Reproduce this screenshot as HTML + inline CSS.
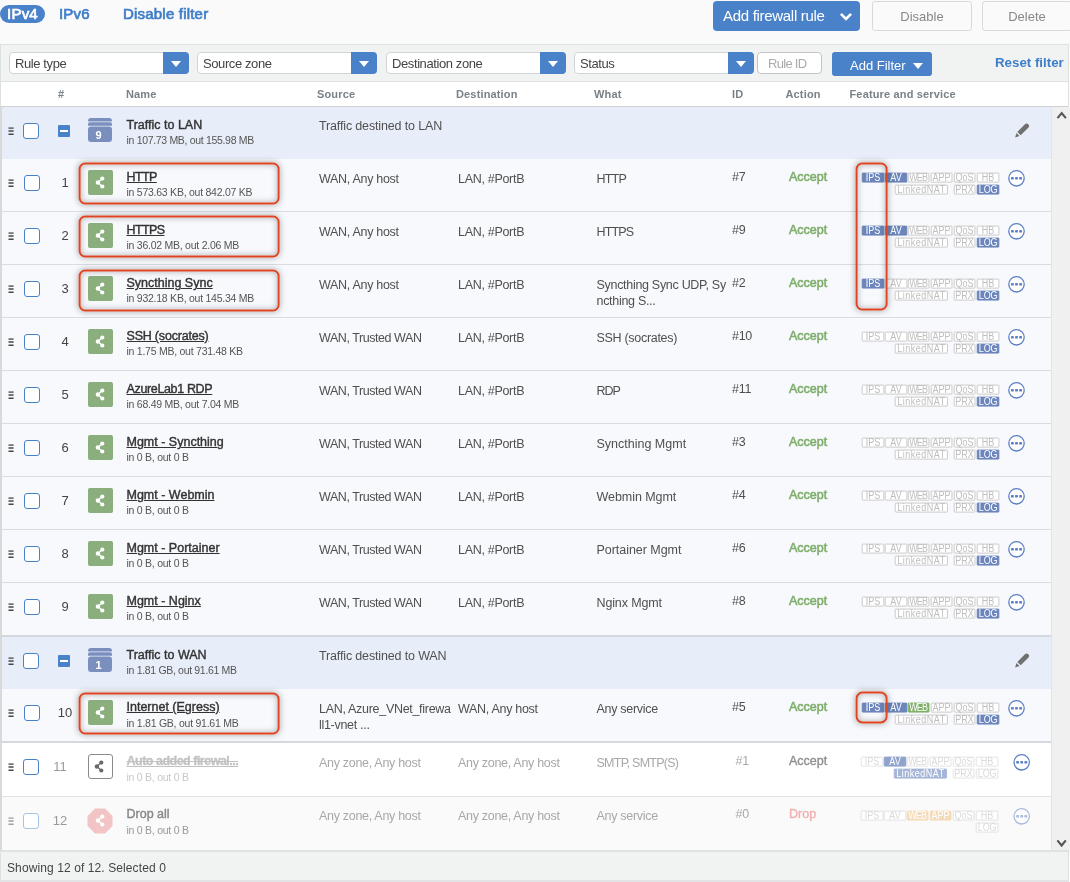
<!DOCTYPE html>
<html><head><meta charset="utf-8"><title>Firewall rules</title>
<style>
*{box-sizing:border-box;margin:0;padding:0}
html,body{width:1070px;height:882px;overflow:hidden;background:#fafafa}
body{position:relative;font-family:"Liberation Sans",sans-serif;color:#444;font-size:13px}
#wrap{position:absolute;left:0;top:0;width:1070px;height:882px;will-change:transform;overflow:hidden}
.abs{position:absolute}
.tab{position:absolute;top:5px;font-size:15px;font-weight:normal;-webkit-text-stroke:0.7px #3f7ec8;color:#3f7ec8;line-height:18px;height:18px;letter-spacing:0.2px}
.tab.on{left:0;width:45px;background:#4a82c9;color:#fff;-webkit-text-stroke-color:#fff;border-radius:9px;text-align:center}
.btn{position:absolute;top:1px;height:30px;border-radius:4px;font-size:15px;line-height:30px}
.btn.pri{left:713px;width:147px;background:#4a82c9;color:#fff;padding-left:10px;letter-spacing:-0.3px}
.btn.sec{background:#fafafa;border:1px solid #d9d9d9;color:#888;text-align:center;line-height:29px;font-size:13px;top:1px;height:30px;border-radius:3px}
.fbar{position:absolute;left:0;top:44px;width:1069px;height:37px;background:#f1f3f3;border:1px solid #dde1e4;border-bottom:none}
.sel{position:absolute;top:52px;height:22px;letter-spacing:-0.4px;background:#fff;border:1px solid #d0d4d8;border-radius:4px;font-size:13px;line-height:21.5px;padding-left:5px;color:#444}
.sel b{position:absolute;right:-1px;top:-1px;width:26px;height:22px;background:#4a82c9;border-radius:0 4px 4px 0}
.sel b:after{content:"";position:absolute;left:7.5px;top:8.5px;border:5px solid transparent;border-top:6px solid #fff;border-bottom:none}
.hdr{position:absolute;left:0;top:81px;width:1069px;height:26px;background:#fff;border-top:1px solid #dde1e4;border-bottom:1px solid #d2d2d2;border-left:1px solid #dde1e4;border-right:1px solid #dde1e4}
.hdr span{position:absolute;top:5px;font-size:11px;font-weight:bold;color:#7a8288;line-height:14px;letter-spacing:0.150px}
.tbl{position:absolute;left:0;top:107px;width:1052px;height:744px;border-left:2px solid #d9d9d9;background:#f8f9fc}
.row{position:absolute;left:2px;width:1050px;height:53px}
.row.grp{background:#e8eef9;height:52px}
.row.rule{background:#f8f9fc;border-bottom:1px solid #d9dde1}
.row.rule.last{border-bottom:2px solid #d4d9e0}
.row.disabled{background:#fff;border-bottom:1px solid #e0e3e6}
.row.drop{background:#fafafa;border-bottom:1px solid #e0e3e6}
.drag{position:absolute;left:6px;top:20px;transform:translate(0.3px,0.2px)}
.cb{position:absolute;left:22px;top:16px;width:16px;height:16px;border:1px solid #4a82c9;border-radius:3px;background:#fff}
.minus{position:absolute;left:56px;top:18px;width:12px;height:12px;background:#4a82c9;border-radius:1px}
.minus:after{content:"";position:absolute;left:2px;top:5px;width:8px;height:2px;background:#fff}
.gicon{position:absolute;left:86px;top:11px;width:24px;height:24px}
.gicon svg{position:absolute;left:0;top:0}
.gicon b{position:absolute;left:-1.5px;top:11px;width:24px;text-align:center;color:#fff;font-size:11px;line-height:12px}
.num{position:absolute;left:48px;top:16px;width:30px;text-align:center;font-size:13px;line-height:16px;color:#444}
.ricon{position:absolute;left:86px;top:11px;width:25px;height:25px;background:#8aae7c;border-radius:2px}
.ricon svg{position:absolute;left:0;top:0}
.ricon.dis{background:#fff;border:1.5px solid #8a8a8a;border-radius:3px}
.ricon.dis svg{left:-1.5px;top:-1.5px}
.ricon.oct{background:none;width:26px;height:26px}
.ricon.oct svg{left:0;top:0}
.ricon.oct .in svg{left:0.5px;top:0.5px}
.nm{position:absolute;left:124.5px;top:11px;font-size:12.5px;font-weight:normal;-webkit-text-stroke:0.4px #333;color:#333;line-height:15px;white-space:nowrap;letter-spacing:0px}
.nm.rn{text-decoration:underline;top:11px}
.rule .sub{top:27px}
.grp .cb{left:21px}
.sub{position:absolute;left:124.5px;top:27px;font-size:10.5px;color:#555;line-height:13px;white-space:nowrap;letter-spacing:-0.250px}
.grp .sub{letter-spacing:-0.320px}
.c{position:absolute;font-size:12.5px;line-height:16px;color:#505050;white-space:nowrap;top:12px;letter-spacing:-0.3px}
.c.two{top:12px;line-height:16.4px}
.src{left:317px} .dst{left:456px} .what{left:594.5px} .rid{left:730px;top:10px} .act{left:787px;top:10px;color:#7fae6c;-webkit-text-stroke:0.550px #7fae6c;letter-spacing:0}
.disabled .rid,.drop .rid{left:733.5px}
.grp .src{top:11px;letter-spacing:-0.150px}
.r10 .sub{top:28px}
.pencil{position:absolute;left:1012.7px;top:16.3px}
.dots{position:absolute;left:1005px;top:10px;transform:translate(0.5px,0.3px)}
.dots.dx{left:1010px;transform:translate(0.7px,0.3px)}
.tg{position:absolute;transform:translate(-0.2px,0.6px) scaleX(0.900);transform-origin:0 0;height:10px;border:1px solid #c9c9c9;border-radius:1px;font-size:10px;letter-spacing:0;line-height:8.5px;text-align:center;color:#bebebe;background:#fff;white-space:nowrap}
.tg.on{background:#6c86bb;border-color:#6c86bb;color:#fff}
.tg.gr{background:#7fb069;border-color:#7fb069;color:#fff}
.tg.or{background:#f5cf9f;border-color:#f5cf9f;color:#fff}
.feat.disabled .tg{color:#dadada;border-color:#e3e3e3}
.feat.disabled .tg.on{background:#8fa3cc;border-color:#8fa3cc;color:#fff}
.feat.disabled .tg.on.nat{background:#a6b6d8;border-color:#a6b6d8}
.feat.drop .tg{color:#dadada;border-color:#e0e0e0}
.feat.drop .tg.or{background:#f4dbba;border-color:#f4dbba;color:#fff}
.disabled .nm{letter-spacing:-0.5px;color:#c2c2c2;-webkit-text-stroke:0.3px #c2c2c2;text-decoration:line-through underline;font-weight:bold}
.disabled .sub{color:#c8c8c8}
.disabled .c,.drop .c{color:#a8a8a8}
.disabled .num,.drop .num{color:#999;left:43px}
.disabled .cb,.drop .cb{left:21px}
.disabled .ricon{left:85.5px}
.drop .ricon{left:85.2px;top:10.5px}
.disabled .sub{top:28px}
.drop .nm{top:10px}
.disabled .act{color:#8e8e8e;-webkit-text-stroke:0.350px #8e8e8e}
.drop .act{color:#f1b0b1;-webkit-text-stroke:0.350px #f1b0b1}
.drop .c{top:11px}
.drop .c.rid,.drop .c.act{top:9px}
.drop .nm{color:#888;-webkit-text-stroke-color:#888;text-decoration:none}
.drop .sub{color:#999}
.drop .cb{border-color:#a9c3e6}
.drop .drag{opacity:.5}
.drop .dots{opacity:.5}
.hl{position:absolute;border:2.4px solid #df4320;border-radius:6.5px;box-shadow:0 0 6px rgba(0,0,0,.3), inset 0 0 6px rgba(0,0,0,.3);transform:translate(-0.4px,-0.5px)}
.sb{position:absolute;left:1051px;top:107px;width:19px;height:744px;background:#f0f0f0;border-left:1px solid #e3e4e6}
.sb svg{position:absolute;left:0;top:0}
.foot{position:absolute;left:0;top:850px;width:1069px;height:32px;background:#f1f3f3;border-top:2px solid #dfe1e2;border-left:1px solid #dde1e4;border-right:1px solid #dde1e4;border-bottom:2px solid #e2e3e4;font-size:12px;line-height:32px;padding-left:6px;color:#444;letter-spacing:0.1px}
</style></head><body><div id="wrap">
<div class="tab on">IPv4</div>
<div class="tab" style="left:59px">IPv6</div>
<div class="tab" style="left:123px">Disable filter</div>
<div class="btn pri">Add firewall rule<svg class="abs" style="left:126.5px;top:11px;overflow:visible" width="12" height="10" viewBox="0 0 12 10"><path d="M0.9 1.8 L6 6.9 L11.1 1.8" fill="none" stroke="#fff" stroke-width="2.6"/></svg></div>
<div class="btn sec" style="left:872px;width:100px">Disable</div>
<div class="btn sec" style="left:982px;width:90px">Delete</div>
<div class="fbar"></div>
<div class="sel" style="left:9px;width:180px">Rule type<b></b></div>
<div class="sel" style="left:197px;width:180px">Source zone<b></b></div>
<div class="sel" style="left:386px;width:180px">Destination zone<b></b></div>
<div class="sel" style="left:574px;width:180px">Status<b></b></div>
<div class="sel" style="left:757px;width:65px;border-color:#c4c4c4;color:#aaa;padding-left:10px;letter-spacing:-0.7px">Rule ID</div>
<div class="abs" style="left:832px;top:52px;width:100px;height:24px;background:#4a82c9;border-radius:3px;color:#fff;font-size:13px;line-height:27px;padding-left:18px">Add Filter<i class="abs" style="left:81px;top:11px;border:5px solid transparent;border-top:6px solid #fff;border-bottom:none"></i></div>
<div class="abs" style="left:995px;top:54.5px;font-size:13.3px;font-weight:bold;color:#3f7ec8;line-height:16px">Reset filter</div>
<div class="hdr">
<span style="left:57px">#</span><span style="left:125px">Name</span><span style="left:316px">Source</span><span style="left:455px">Destination</span><span style="left:593px">What</span><span style="left:731px">ID</span><span style="left:784.5px">Action</span><span style="left:848.5px">Feature and service</span>
</div>
<div class="tbl"></div>
<div class="row grp" style="top:107px">
<svg class="drag" width="6" height="8" viewBox="0 0 6 8"><path d="M0 0.750h5.300M0 3.900h5.300M0 7.050h5.3" stroke="#484848" stroke-width="1.5"/></svg><i class="cb"></i><i class="minus"></i>
<div class="gicon"><svg width="24" height="24" viewBox="0 0 24 24"><path fill="#7b8fbe" d="M0 3.500V3a3 3 0 0 1 3-3h18a3 3 0 0 1 3 3v0.500zM0 7.800V6.200a2 2 0 0 1 2-2h20a2 2 0 0 1 2 2v1.600zM0 11.500a3 3 0 0 1 3-3h18a3 3 0 0 1 3 3v9.500a3 3 0 0 1-3 3H3a3 3 0 0 1-3-3z"/></svg><b>9</b></div>
<div class="nm gn">Traffic to LAN</div><div class="sub">in 107.73 MB, out 155.98 MB</div>
<div class="c src">Traffic destined to LAN</div>
<svg class="pencil" viewBox="0 0 15 15" width="15" height="15"><path fill="#707070" d="M9.9 1.3 Q11.6 -0.3 13.3 1.3 Q14.9 3 13.3 4.7 L5.7 12.3 L2.3 8.9 Z M1.5 10.1 L4.5 13.1 L0.1 14.5 Z"/></svg>
</div>
<div class="row rule " style="top:159px;height:53px">
<svg class="drag" width="6" height="8" viewBox="0 0 6 8"><path d="M0 0.750h5.300M0 3.900h5.300M0 7.050h5.3" stroke="#484848" stroke-width="1.5"/></svg><i class="cb"></i><span class="num">1</span>
<div class="ricon"><svg viewBox="0 0 25 25" width="25" height="25"><g fill="#fff" stroke="#fff"><circle cx="14.3" cy="8.6" r="2.1" stroke="none"/><circle cx="14.3" cy="16.5" r="2.1" stroke="none"/><circle cx="9.9" cy="12.5" r="2.2" stroke="none"/><path d="M14.3 8.6 L9.9 12.5 L14.3 16.5" fill="none" stroke-width="1.3"/></g></svg></div>
<div class="nm rn" style="letter-spacing:-0.6px">HTTP</div><div class="sub">in 573.63 KB, out 842.07 KB</div>
<div class="c src">WAN, Any host</div><div class="c dst">LAN, #PortB</div><div class="c what" style="letter-spacing:-0.8px">HTTP</div>
<div class="c rid">#7</div><div class="c act">Accept</div>
<svg class="dots" width="18" height="18" viewBox="0 0 18 18"><circle cx="9" cy="9" r="7.7" fill="#fff" stroke="#5b7fc4" stroke-width="1.3"/><g fill="#5b7fc4"><rect x="3.5" y="7.7" width="2.8" height="2.6" rx="0.7"/><rect x="7.6" y="7.7" width="2.8" height="2.6" rx="0.7"/><rect x="11.7" y="7.7" width="2.8" height="2.6" rx="0.7"/></g></svg>
</div>
<div class="feat "><span class="tg on" style="left:862px;top:172px;width:25.0px;">IPS</span><span class="tg on" style="left:885px;top:172px;width:25.0px;">AV</span><span class="tg" style="left:908px;top:172px;width:23.9px;letter-spacing:-1px;text-indent:-1px">WEB</span><span class="tg" style="left:931px;top:172px;width:23.9px;">APP</span><span class="tg" style="left:954px;top:172px;width:23.9px;">QoS</span><span class="tg" style="left:977px;top:172px;width:25.0px;">HB</span><span class="tg" style="left:895px;top:184px;width:59.4px;letter-spacing:0.550px">LinkedNAT</span><span class="tg" style="left:954px;top:184px;width:23.9px;">PRX</span><span class="tg on" style="left:977px;top:184px;width:25.0px;letter-spacing:-0.2px">LOG</span></div>
<div class="row rule " style="top:212px;height:53px">
<svg class="drag" width="6" height="8" viewBox="0 0 6 8"><path d="M0 0.750h5.300M0 3.900h5.300M0 7.050h5.3" stroke="#484848" stroke-width="1.5"/></svg><i class="cb"></i><span class="num">2</span>
<div class="ricon"><svg viewBox="0 0 25 25" width="25" height="25"><g fill="#fff" stroke="#fff"><circle cx="14.3" cy="8.6" r="2.1" stroke="none"/><circle cx="14.3" cy="16.5" r="2.1" stroke="none"/><circle cx="9.9" cy="12.5" r="2.2" stroke="none"/><path d="M14.3 8.6 L9.9 12.5 L14.3 16.5" fill="none" stroke-width="1.3"/></g></svg></div>
<div class="nm rn" style="letter-spacing:-0.6px">HTTPS</div><div class="sub">in 36.02 MB, out 2.06 MB</div>
<div class="c src">WAN, Any host</div><div class="c dst">LAN, #PortB</div><div class="c what" style="letter-spacing:-0.85px">HTTPS</div>
<div class="c rid">#9</div><div class="c act">Accept</div>
<svg class="dots" width="18" height="18" viewBox="0 0 18 18"><circle cx="9" cy="9" r="7.7" fill="#fff" stroke="#5b7fc4" stroke-width="1.3"/><g fill="#5b7fc4"><rect x="3.5" y="7.7" width="2.8" height="2.6" rx="0.7"/><rect x="7.6" y="7.7" width="2.8" height="2.6" rx="0.7"/><rect x="11.7" y="7.7" width="2.8" height="2.6" rx="0.7"/></g></svg>
</div>
<div class="feat "><span class="tg on" style="left:862px;top:225px;width:25.0px;">IPS</span><span class="tg on" style="left:885px;top:225px;width:25.0px;">AV</span><span class="tg" style="left:908px;top:225px;width:23.9px;letter-spacing:-1px;text-indent:-1px">WEB</span><span class="tg" style="left:931px;top:225px;width:23.9px;">APP</span><span class="tg" style="left:954px;top:225px;width:23.9px;">QoS</span><span class="tg" style="left:977px;top:225px;width:25.0px;">HB</span><span class="tg" style="left:895px;top:237px;width:59.4px;letter-spacing:0.550px">LinkedNAT</span><span class="tg" style="left:954px;top:237px;width:23.9px;">PRX</span><span class="tg on" style="left:977px;top:237px;width:25.0px;letter-spacing:-0.2px">LOG</span></div>
<div class="row rule " style="top:265px;height:53px">
<svg class="drag" width="6" height="8" viewBox="0 0 6 8"><path d="M0 0.750h5.300M0 3.900h5.300M0 7.050h5.3" stroke="#484848" stroke-width="1.5"/></svg><i class="cb"></i><span class="num">3</span>
<div class="ricon"><svg viewBox="0 0 25 25" width="25" height="25"><g fill="#fff" stroke="#fff"><circle cx="14.3" cy="8.6" r="2.1" stroke="none"/><circle cx="14.3" cy="16.5" r="2.1" stroke="none"/><circle cx="9.9" cy="12.5" r="2.2" stroke="none"/><path d="M14.3 8.6 L9.9 12.5 L14.3 16.5" fill="none" stroke-width="1.3"/></g></svg></div>
<div class="nm rn">Syncthing Sync</div><div class="sub">in 932.18 KB, out 145.34 MB</div>
<div class="c src">WAN, Any host</div><div class="c dst">LAN, #PortB</div><div class="c what two">Syncthing Sync UDP, Sy<br>ncthing S...</div>
<div class="c rid">#2</div><div class="c act">Accept</div>
<svg class="dots" width="18" height="18" viewBox="0 0 18 18"><circle cx="9" cy="9" r="7.7" fill="#fff" stroke="#5b7fc4" stroke-width="1.3"/><g fill="#5b7fc4"><rect x="3.5" y="7.7" width="2.8" height="2.6" rx="0.7"/><rect x="7.6" y="7.7" width="2.8" height="2.6" rx="0.7"/><rect x="11.7" y="7.7" width="2.8" height="2.6" rx="0.7"/></g></svg>
</div>
<div class="feat "><span class="tg on" style="left:862px;top:278px;width:25.0px;">IPS</span><span class="tg" style="left:885px;top:278px;width:25.0px;">AV</span><span class="tg" style="left:908px;top:278px;width:23.9px;letter-spacing:-1px;text-indent:-1px">WEB</span><span class="tg" style="left:931px;top:278px;width:23.9px;">APP</span><span class="tg" style="left:954px;top:278px;width:23.9px;">QoS</span><span class="tg" style="left:977px;top:278px;width:25.0px;">HB</span><span class="tg" style="left:895px;top:290px;width:59.4px;letter-spacing:0.550px">LinkedNAT</span><span class="tg" style="left:954px;top:290px;width:23.9px;">PRX</span><span class="tg on" style="left:977px;top:290px;width:25.0px;letter-spacing:-0.2px">LOG</span></div>
<div class="row rule " style="top:318px;height:53px">
<svg class="drag" width="6" height="8" viewBox="0 0 6 8"><path d="M0 0.750h5.300M0 3.900h5.300M0 7.050h5.3" stroke="#484848" stroke-width="1.5"/></svg><i class="cb"></i><span class="num">4</span>
<div class="ricon"><svg viewBox="0 0 25 25" width="25" height="25"><g fill="#fff" stroke="#fff"><circle cx="14.3" cy="8.6" r="2.1" stroke="none"/><circle cx="14.3" cy="16.5" r="2.1" stroke="none"/><circle cx="9.9" cy="12.5" r="2.2" stroke="none"/><path d="M14.3 8.6 L9.9 12.5 L14.3 16.5" fill="none" stroke-width="1.3"/></g></svg></div>
<div class="nm rn" style="letter-spacing:-0.2px">SSH (socrates)</div><div class="sub">in 1.75 MB, out 731.48 KB</div>
<div class="c src" style="letter-spacing:-0.44px">WAN, Trusted WAN</div><div class="c dst">LAN, #PortB</div><div class="c what">SSH (socrates)</div>
<div class="c rid">#10</div><div class="c act">Accept</div>
<svg class="dots" width="18" height="18" viewBox="0 0 18 18"><circle cx="9" cy="9" r="7.7" fill="#fff" stroke="#5b7fc4" stroke-width="1.3"/><g fill="#5b7fc4"><rect x="3.5" y="7.7" width="2.8" height="2.6" rx="0.7"/><rect x="7.6" y="7.7" width="2.8" height="2.6" rx="0.7"/><rect x="11.7" y="7.7" width="2.8" height="2.6" rx="0.7"/></g></svg>
</div>
<div class="feat "><span class="tg" style="left:862px;top:331px;width:25.0px;">IPS</span><span class="tg" style="left:885px;top:331px;width:25.0px;">AV</span><span class="tg" style="left:908px;top:331px;width:23.9px;letter-spacing:-1px;text-indent:-1px">WEB</span><span class="tg" style="left:931px;top:331px;width:23.9px;">APP</span><span class="tg" style="left:954px;top:331px;width:23.9px;">QoS</span><span class="tg" style="left:977px;top:331px;width:25.0px;">HB</span><span class="tg" style="left:895px;top:343px;width:59.4px;letter-spacing:0.550px">LinkedNAT</span><span class="tg" style="left:954px;top:343px;width:23.9px;">PRX</span><span class="tg on" style="left:977px;top:343px;width:25.0px;letter-spacing:-0.2px">LOG</span></div>
<div class="row rule " style="top:371px;height:53px">
<svg class="drag" width="6" height="8" viewBox="0 0 6 8"><path d="M0 0.750h5.300M0 3.900h5.300M0 7.050h5.3" stroke="#484848" stroke-width="1.5"/></svg><i class="cb"></i><span class="num">5</span>
<div class="ricon"><svg viewBox="0 0 25 25" width="25" height="25"><g fill="#fff" stroke="#fff"><circle cx="14.3" cy="8.6" r="2.1" stroke="none"/><circle cx="14.3" cy="16.5" r="2.1" stroke="none"/><circle cx="9.9" cy="12.5" r="2.2" stroke="none"/><path d="M14.3 8.6 L9.9 12.5 L14.3 16.5" fill="none" stroke-width="1.3"/></g></svg></div>
<div class="nm rn" style="letter-spacing:-0.350px">AzureLab1 RDP</div><div class="sub">in 68.49 MB, out 7.04 MB</div>
<div class="c src" style="letter-spacing:-0.44px">WAN, Trusted WAN</div><div class="c dst">LAN, #PortB</div><div class="c what" style="letter-spacing:-1.0px">RDP</div>
<div class="c rid">#11</div><div class="c act">Accept</div>
<svg class="dots" width="18" height="18" viewBox="0 0 18 18"><circle cx="9" cy="9" r="7.7" fill="#fff" stroke="#5b7fc4" stroke-width="1.3"/><g fill="#5b7fc4"><rect x="3.5" y="7.7" width="2.8" height="2.6" rx="0.7"/><rect x="7.6" y="7.7" width="2.8" height="2.6" rx="0.7"/><rect x="11.7" y="7.7" width="2.8" height="2.6" rx="0.7"/></g></svg>
</div>
<div class="feat "><span class="tg" style="left:862px;top:384px;width:25.0px;">IPS</span><span class="tg" style="left:885px;top:384px;width:25.0px;">AV</span><span class="tg" style="left:908px;top:384px;width:23.9px;letter-spacing:-1px;text-indent:-1px">WEB</span><span class="tg" style="left:931px;top:384px;width:23.9px;">APP</span><span class="tg" style="left:954px;top:384px;width:23.9px;">QoS</span><span class="tg" style="left:977px;top:384px;width:25.0px;">HB</span><span class="tg" style="left:895px;top:396px;width:59.4px;letter-spacing:0.550px">LinkedNAT</span><span class="tg" style="left:954px;top:396px;width:23.9px;">PRX</span><span class="tg on" style="left:977px;top:396px;width:25.0px;letter-spacing:-0.2px">LOG</span></div>
<div class="row rule " style="top:424px;height:53px">
<svg class="drag" width="6" height="8" viewBox="0 0 6 8"><path d="M0 0.750h5.300M0 3.900h5.300M0 7.050h5.3" stroke="#484848" stroke-width="1.5"/></svg><i class="cb"></i><span class="num">6</span>
<div class="ricon"><svg viewBox="0 0 25 25" width="25" height="25"><g fill="#fff" stroke="#fff"><circle cx="14.3" cy="8.6" r="2.1" stroke="none"/><circle cx="14.3" cy="16.5" r="2.1" stroke="none"/><circle cx="9.9" cy="12.5" r="2.2" stroke="none"/><path d="M14.3 8.6 L9.9 12.5 L14.3 16.5" fill="none" stroke-width="1.3"/></g></svg></div>
<div class="nm rn">Mgmt - Syncthing</div><div class="sub">in 0 B, out 0 B</div>
<div class="c src" style="letter-spacing:-0.44px">WAN, Trusted WAN</div><div class="c dst">LAN, #PortB</div><div class="c what" style="letter-spacing:0px">Syncthing Mgmt</div>
<div class="c rid">#3</div><div class="c act">Accept</div>
<svg class="dots" width="18" height="18" viewBox="0 0 18 18"><circle cx="9" cy="9" r="7.7" fill="#fff" stroke="#5b7fc4" stroke-width="1.3"/><g fill="#5b7fc4"><rect x="3.5" y="7.7" width="2.8" height="2.6" rx="0.7"/><rect x="7.6" y="7.7" width="2.8" height="2.6" rx="0.7"/><rect x="11.7" y="7.7" width="2.8" height="2.6" rx="0.7"/></g></svg>
</div>
<div class="feat "><span class="tg" style="left:862px;top:437px;width:25.0px;">IPS</span><span class="tg" style="left:885px;top:437px;width:25.0px;">AV</span><span class="tg" style="left:908px;top:437px;width:23.9px;letter-spacing:-1px;text-indent:-1px">WEB</span><span class="tg" style="left:931px;top:437px;width:23.9px;">APP</span><span class="tg" style="left:954px;top:437px;width:23.9px;">QoS</span><span class="tg" style="left:977px;top:437px;width:25.0px;">HB</span><span class="tg" style="left:895px;top:449px;width:59.4px;letter-spacing:0.550px">LinkedNAT</span><span class="tg" style="left:954px;top:449px;width:23.9px;">PRX</span><span class="tg on" style="left:977px;top:449px;width:25.0px;letter-spacing:-0.2px">LOG</span></div>
<div class="row rule " style="top:477px;height:53px">
<svg class="drag" width="6" height="8" viewBox="0 0 6 8"><path d="M0 0.750h5.300M0 3.900h5.300M0 7.050h5.3" stroke="#484848" stroke-width="1.5"/></svg><i class="cb"></i><span class="num">7</span>
<div class="ricon"><svg viewBox="0 0 25 25" width="25" height="25"><g fill="#fff" stroke="#fff"><circle cx="14.3" cy="8.6" r="2.1" stroke="none"/><circle cx="14.3" cy="16.5" r="2.1" stroke="none"/><circle cx="9.9" cy="12.5" r="2.2" stroke="none"/><path d="M14.3 8.6 L9.9 12.5 L14.3 16.5" fill="none" stroke-width="1.3"/></g></svg></div>
<div class="nm rn">Mgmt - Webmin</div><div class="sub">in 0 B, out 0 B</div>
<div class="c src" style="letter-spacing:-0.44px">WAN, Trusted WAN</div><div class="c dst">LAN, #PortB</div><div class="c what" style="letter-spacing:-0.05px">Webmin Mgmt</div>
<div class="c rid">#4</div><div class="c act">Accept</div>
<svg class="dots" width="18" height="18" viewBox="0 0 18 18"><circle cx="9" cy="9" r="7.7" fill="#fff" stroke="#5b7fc4" stroke-width="1.3"/><g fill="#5b7fc4"><rect x="3.5" y="7.7" width="2.8" height="2.6" rx="0.7"/><rect x="7.6" y="7.7" width="2.8" height="2.6" rx="0.7"/><rect x="11.7" y="7.7" width="2.8" height="2.6" rx="0.7"/></g></svg>
</div>
<div class="feat "><span class="tg" style="left:862px;top:490px;width:25.0px;">IPS</span><span class="tg" style="left:885px;top:490px;width:25.0px;">AV</span><span class="tg" style="left:908px;top:490px;width:23.9px;letter-spacing:-1px;text-indent:-1px">WEB</span><span class="tg" style="left:931px;top:490px;width:23.9px;">APP</span><span class="tg" style="left:954px;top:490px;width:23.9px;">QoS</span><span class="tg" style="left:977px;top:490px;width:25.0px;">HB</span><span class="tg" style="left:895px;top:502px;width:59.4px;letter-spacing:0.550px">LinkedNAT</span><span class="tg" style="left:954px;top:502px;width:23.9px;">PRX</span><span class="tg on" style="left:977px;top:502px;width:25.0px;letter-spacing:-0.2px">LOG</span></div>
<div class="row rule " style="top:530px;height:53px">
<svg class="drag" width="6" height="8" viewBox="0 0 6 8"><path d="M0 0.750h5.300M0 3.900h5.300M0 7.050h5.3" stroke="#484848" stroke-width="1.5"/></svg><i class="cb"></i><span class="num">8</span>
<div class="ricon"><svg viewBox="0 0 25 25" width="25" height="25"><g fill="#fff" stroke="#fff"><circle cx="14.3" cy="8.6" r="2.1" stroke="none"/><circle cx="14.3" cy="16.5" r="2.1" stroke="none"/><circle cx="9.9" cy="12.5" r="2.2" stroke="none"/><path d="M14.3 8.6 L9.9 12.5 L14.3 16.5" fill="none" stroke-width="1.3"/></g></svg></div>
<div class="nm rn">Mgmt - Portainer</div><div class="sub">in 0 B, out 0 B</div>
<div class="c src" style="letter-spacing:-0.44px">WAN, Trusted WAN</div><div class="c dst">LAN, #PortB</div><div class="c what" style="letter-spacing:-0.04px">Portainer Mgmt</div>
<div class="c rid">#6</div><div class="c act">Accept</div>
<svg class="dots" width="18" height="18" viewBox="0 0 18 18"><circle cx="9" cy="9" r="7.7" fill="#fff" stroke="#5b7fc4" stroke-width="1.3"/><g fill="#5b7fc4"><rect x="3.5" y="7.7" width="2.8" height="2.6" rx="0.7"/><rect x="7.6" y="7.7" width="2.8" height="2.6" rx="0.7"/><rect x="11.7" y="7.7" width="2.8" height="2.6" rx="0.7"/></g></svg>
</div>
<div class="feat "><span class="tg" style="left:862px;top:543px;width:25.0px;">IPS</span><span class="tg" style="left:885px;top:543px;width:25.0px;">AV</span><span class="tg" style="left:908px;top:543px;width:23.9px;letter-spacing:-1px;text-indent:-1px">WEB</span><span class="tg" style="left:931px;top:543px;width:23.9px;">APP</span><span class="tg" style="left:954px;top:543px;width:23.9px;">QoS</span><span class="tg" style="left:977px;top:543px;width:25.0px;">HB</span><span class="tg" style="left:895px;top:555px;width:59.4px;letter-spacing:0.550px">LinkedNAT</span><span class="tg" style="left:954px;top:555px;width:23.9px;">PRX</span><span class="tg on" style="left:977px;top:555px;width:25.0px;letter-spacing:-0.2px">LOG</span></div>
<div class="row rule last" style="top:583px;height:54px">
<svg class="drag" width="6" height="8" viewBox="0 0 6 8"><path d="M0 0.750h5.300M0 3.900h5.300M0 7.050h5.3" stroke="#484848" stroke-width="1.5"/></svg><i class="cb"></i><span class="num">9</span>
<div class="ricon"><svg viewBox="0 0 25 25" width="25" height="25"><g fill="#fff" stroke="#fff"><circle cx="14.3" cy="8.6" r="2.1" stroke="none"/><circle cx="14.3" cy="16.5" r="2.1" stroke="none"/><circle cx="9.9" cy="12.5" r="2.2" stroke="none"/><path d="M14.3 8.6 L9.9 12.5 L14.3 16.5" fill="none" stroke-width="1.3"/></g></svg></div>
<div class="nm rn">Mgmt - Nginx</div><div class="sub">in 0 B, out 0 B</div>
<div class="c src" style="letter-spacing:-0.44px">WAN, Trusted WAN</div><div class="c dst">LAN, #PortB</div><div class="c what" style="letter-spacing:-0.13px">Nginx Mgmt</div>
<div class="c rid">#8</div><div class="c act">Accept</div>
<svg class="dots" width="18" height="18" viewBox="0 0 18 18"><circle cx="9" cy="9" r="7.7" fill="#fff" stroke="#5b7fc4" stroke-width="1.3"/><g fill="#5b7fc4"><rect x="3.5" y="7.7" width="2.8" height="2.6" rx="0.7"/><rect x="7.6" y="7.7" width="2.8" height="2.6" rx="0.7"/><rect x="11.7" y="7.7" width="2.8" height="2.6" rx="0.7"/></g></svg>
</div>
<div class="feat last"><span class="tg" style="left:862px;top:596px;width:25.0px;">IPS</span><span class="tg" style="left:885px;top:596px;width:25.0px;">AV</span><span class="tg" style="left:908px;top:596px;width:23.9px;letter-spacing:-1px;text-indent:-1px">WEB</span><span class="tg" style="left:931px;top:596px;width:23.9px;">APP</span><span class="tg" style="left:954px;top:596px;width:23.9px;">QoS</span><span class="tg" style="left:977px;top:596px;width:25.0px;">HB</span><span class="tg" style="left:895px;top:608px;width:59.4px;letter-spacing:0.550px">LinkedNAT</span><span class="tg" style="left:954px;top:608px;width:23.9px;">PRX</span><span class="tg on" style="left:977px;top:608px;width:25.0px;letter-spacing:-0.2px">LOG</span></div>
<div class="row grp" style="top:637px">
<svg class="drag" width="6" height="8" viewBox="0 0 6 8"><path d="M0 0.750h5.300M0 3.900h5.300M0 7.050h5.3" stroke="#484848" stroke-width="1.5"/></svg><i class="cb"></i><i class="minus"></i>
<div class="gicon"><svg width="24" height="24" viewBox="0 0 24 24"><path fill="#7b8fbe" d="M0 3.500V3a3 3 0 0 1 3-3h18a3 3 0 0 1 3 3v0.500zM0 7.800V6.200a2 2 0 0 1 2-2h20a2 2 0 0 1 2 2v1.600zM0 11.500a3 3 0 0 1 3-3h18a3 3 0 0 1 3 3v9.500a3 3 0 0 1-3 3H3a3 3 0 0 1-3-3z"/></svg><b>1</b></div>
<div class="nm gn">Traffic to WAN</div><div class="sub">in 1.81 GB, out 91.61 MB</div>
<div class="c src">Traffic destined to WAN</div>
<svg class="pencil" viewBox="0 0 15 15" width="15" height="15"><path fill="#707070" d="M9.9 1.3 Q11.6 -0.3 13.3 1.3 Q14.9 3 13.3 4.7 L5.7 12.3 L2.3 8.9 Z M1.5 10.1 L4.5 13.1 L0.1 14.5 Z"/></svg>
</div>
<div class="row rule last r10" style="top:689px;height:54px">
<svg class="drag" width="6" height="8" viewBox="0 0 6 8"><path d="M0 0.750h5.300M0 3.900h5.300M0 7.050h5.3" stroke="#484848" stroke-width="1.5"/></svg><i class="cb"></i><span class="num">10</span>
<div class="ricon"><svg viewBox="0 0 25 25" width="25" height="25"><g fill="#fff" stroke="#fff"><circle cx="14.3" cy="8.6" r="2.1" stroke="none"/><circle cx="14.3" cy="16.5" r="2.1" stroke="none"/><circle cx="9.9" cy="12.5" r="2.2" stroke="none"/><path d="M14.3 8.6 L9.9 12.5 L14.3 16.5" fill="none" stroke-width="1.3"/></g></svg></div>
<div class="nm rn">Internet (Egress)</div><div class="sub">in 1.81 GB, out 91.61 MB</div>
<div class="c src two">LAN, Azure_VNet_firewa<br>ll1-vnet ...</div><div class="c dst">WAN, Any host</div><div class="c what">Any service</div>
<div class="c rid">#5</div><div class="c act">Accept</div>
<svg class="dots" width="18" height="18" viewBox="0 0 18 18"><circle cx="9" cy="9" r="7.7" fill="#fff" stroke="#5b7fc4" stroke-width="1.3"/><g fill="#5b7fc4"><rect x="3.5" y="7.7" width="2.8" height="2.6" rx="0.7"/><rect x="7.6" y="7.7" width="2.8" height="2.6" rx="0.7"/><rect x="11.7" y="7.7" width="2.8" height="2.6" rx="0.7"/></g></svg>
</div>
<div class="feat last r10"><span class="tg on" style="left:862px;top:702px;width:25.0px;">IPS</span><span class="tg on" style="left:885px;top:702px;width:25.0px;">AV</span><span class="tg gr" style="left:908px;top:702px;width:23.9px;letter-spacing:-1px;text-indent:-1px">WEB</span><span class="tg" style="left:931px;top:702px;width:23.9px;">APP</span><span class="tg" style="left:954px;top:702px;width:23.9px;">QoS</span><span class="tg" style="left:977px;top:702px;width:25.0px;">HB</span><span class="tg" style="left:895px;top:714px;width:59.4px;letter-spacing:0.550px">LinkedNAT</span><span class="tg" style="left:954px;top:714px;width:23.9px;">PRX</span><span class="tg on" style="left:977px;top:714px;width:25.0px;letter-spacing:-0.2px">LOG</span></div>
<div class="row rule disabled" style="top:743px;height:54px">
<svg class="drag" width="6" height="8" viewBox="0 0 6 8"><path d="M0 0.750h5.300M0 3.900h5.300M0 7.050h5.3" stroke="#484848" stroke-width="1.5"/></svg><i class="cb"></i><span class="num">11</span>
<div class="ricon dis"><svg viewBox="0 0 25 25" width="25" height="25"><g fill="#6a6a6a" stroke="#6a6a6a"><circle cx="14.3" cy="8.6" r="2.1" stroke="none"/><circle cx="14.3" cy="16.5" r="2.1" stroke="none"/><circle cx="9.9" cy="12.5" r="2.2" stroke="none"/><path d="M14.3 8.6 L9.9 12.5 L14.3 16.5" fill="none" stroke-width="1.3"/></g></svg></div>
<div class="nm rn">Auto added firewal...</div><div class="sub">in 0 B, out 0 B</div>
<div class="c src">Any zone, Any host</div><div class="c dst">Any zone, Any host</div><div class="c what" style="letter-spacing:-0.75px">SMTP, SMTP(S)</div>
<div class="c rid">#1</div><div class="c act">Accept</div>
<svg class="dots dx" width="18" height="18" viewBox="0 0 18 18"><circle cx="9" cy="9" r="7.7" fill="#fff" stroke="#5b7fc4" stroke-width="1.3"/><g fill="#5b7fc4"><rect x="3.5" y="7.7" width="2.8" height="2.6" rx="0.7"/><rect x="7.6" y="7.7" width="2.8" height="2.6" rx="0.7"/><rect x="11.7" y="7.7" width="2.8" height="2.6" rx="0.7"/></g></svg>
</div>
<div class="feat disabled"><span class="tg" style="left:861px;top:756px;width:25.0px;">IPS</span><span class="tg on" style="left:884px;top:756px;width:25.0px;">AV</span><span class="tg" style="left:907px;top:756px;width:23.9px;letter-spacing:-1px;text-indent:-1px">WEB</span><span class="tg" style="left:930px;top:756px;width:23.9px;">APP</span><span class="tg" style="left:953px;top:756px;width:23.9px;">QoS</span><span class="tg" style="left:976px;top:756px;width:25.0px;">HB</span><span class="tg on nat" style="left:894px;top:768px;width:59.4px;letter-spacing:0.550px">LinkedNAT</span><span class="tg" style="left:953px;top:768px;width:23.9px;">PRX</span><span class="tg" style="left:976px;top:768px;width:25.0px;letter-spacing:-0.2px">LOG</span></div>
<div class="row rule drop" style="top:797px;height:54px">
<svg class="drag" width="6" height="8" viewBox="0 0 6 8"><path d="M0 0.750h5.300M0 3.900h5.300M0 7.050h5.3" stroke="#484848" stroke-width="1.5"/></svg><i class="cb"></i><span class="num">12</span>
<div class="ricon oct"><svg viewBox="0 0 26 26" width="26" height="26"><polygon points="8,0.5 18,0.5 25.500,8 25.500,18 18,25.5 8,25.5 0.500,18 0.500,8" fill="#f3c4c6"/></svg><span class="in"><svg viewBox="0 0 25 25" width="25" height="25"><g fill="#fff" stroke="#fff"><circle cx="14.3" cy="8.6" r="2.1" stroke="none"/><circle cx="14.3" cy="16.5" r="2.1" stroke="none"/><circle cx="9.9" cy="12.5" r="2.2" stroke="none"/><path d="M14.3 8.6 L9.9 12.5 L14.3 16.5" fill="none" stroke-width="1.3"/></g></svg></span></div>
<div class="nm rn">Drop all</div><div class="sub">in 0 B, out 0 B</div>
<div class="c src">Any zone, Any host</div><div class="c dst">Any zone, Any host</div><div class="c what">Any service</div>
<div class="c rid">#0</div><div class="c act">Drop</div>
<svg class="dots dx" width="18" height="18" viewBox="0 0 18 18"><circle cx="9" cy="9" r="7.7" fill="#fff" stroke="#5b7fc4" stroke-width="1.3"/><g fill="#5b7fc4"><rect x="3.5" y="7.7" width="2.8" height="2.6" rx="0.7"/><rect x="7.6" y="7.7" width="2.8" height="2.6" rx="0.7"/><rect x="11.7" y="7.7" width="2.8" height="2.6" rx="0.7"/></g></svg>
</div>
<div class="feat drop"><span class="tg" style="left:861px;top:810px;width:25.0px;">IPS</span><span class="tg" style="left:884px;top:810px;width:25.0px;">AV</span><span class="tg or" style="left:907px;top:810px;width:23.9px;letter-spacing:-1px;text-indent:-1px">WEB</span><span class="tg or" style="left:930px;top:810px;width:23.9px;">APP</span><span class="tg" style="left:953px;top:810px;width:23.9px;">QoS</span><span class="tg" style="left:976px;top:810px;width:25.0px;">HB</span><span class="tg" style="left:976px;top:822px;width:25.0px;letter-spacing:-0.2px">LOG</span></div>
<div class="hl" style="left:79px;top:163px;width:201px;height:42px"></div>
<div class="hl" style="left:79px;top:216px;width:201px;height:42px"></div>
<div class="hl" style="left:79px;top:270px;width:201px;height:42px"></div>
<div class="hl" style="left:79px;top:693px;width:201px;height:42px"></div>
<div class="hl" style="left:856px;top:163px;width:32px;height:148px"></div>
<div class="hl" style="left:855.5px;top:692px;width:32.5px;height:31.5px;border-radius:7px"></div>
<div class="sb"><svg width="19" height="744" viewBox="0 0 19 744"><path d="M5.5 11.2 L9.7 6.1 L13.9 11.2 M5.4 733.3 L9.6 738.5 L13.8 733.3" fill="none" stroke="#555" stroke-width="2.1"/></svg></div>
<div class="foot">Showing 12 of 12. Selected 0</div>
</div></body></html>
